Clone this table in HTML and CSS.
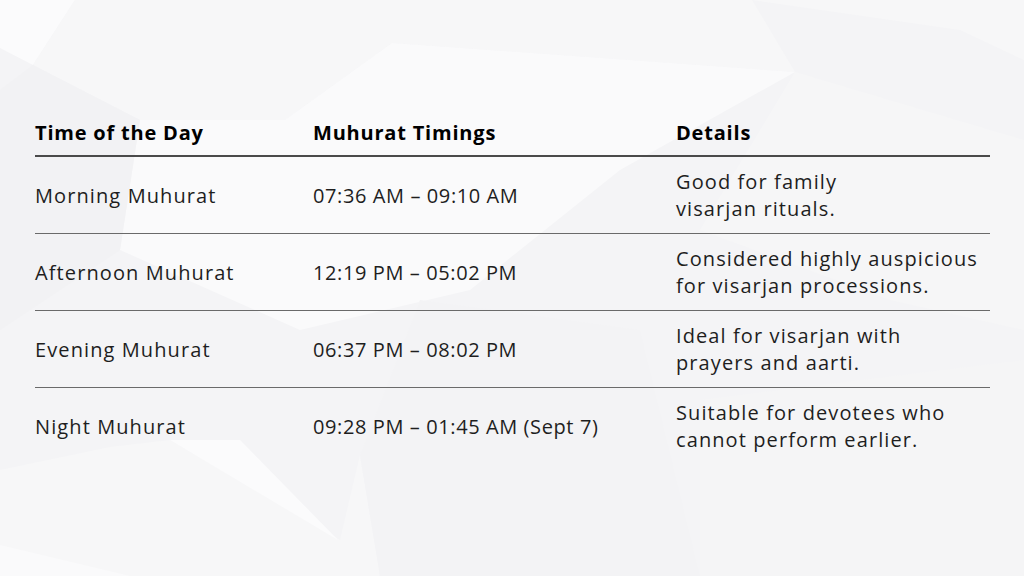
FILE: index.html
```html
<!DOCTYPE html>
<html lang="en">
<head>
<meta charset="utf-8">
<title>Visarjan Muhurat Timings</title>
<link rel="stylesheet" href="styles.css">
</head>
<body>
<svg class="bg" viewBox="0 0 1024 576" preserveAspectRatio="none" aria-hidden="true">
  <rect width="1024" height="576" fill="#f4f4f6"/>
  <polygon points="0,0 75,0 33,65 0,48" fill="#fbfbfc"/>
  <polygon points="75,0 752,0 795,72 392,43 285,120 140,120 33,65" fill="#f7f7f8"/>
  <polygon points="392,43 795,72 620,170 470,290 300,330 120,250 140,120 285,120" fill="#fafafb"/>
  <polygon points="752,0 1024,0 1024,60 960,30" fill="#f7f7f8"/>
  <polygon points="795,72 1024,140 1024,330 890,300 700,230" fill="#f6f6f7"/>
  <polygon points="0,90 33,65 140,120 120,250 0,330" fill="#f2f2f4"/>
  <polygon points="0,470 110,447 170,440 340,540 360,455 380,576 0,576" fill="#f7f7f8"/>
  <polygon points="170,440 240,440 338,540" fill="#fbfbfc"/>
  <polygon points="360,455 420,300 640,330 700,576 380,576" fill="#f3f3f5"/>
  <polygon points="0,545 130,576 0,576" fill="#fafafb"/>
  <polygon points="700,400 1024,360 1024,576 700,576" fill="#f5f5f6"/>
</svg>
<main class="page">
  <div class="table">
    <div class="row head">
      <div class="cell">Time of the Day</div>
      <div class="cell">Muhurat Timings</div>
      <div class="cell">Details</div>
    </div>
    <div class="row">
      <div class="cell">Morning Muhurat</div>
      <div class="cell time">07:36 AM – 09:10 AM</div>
      <div class="cell">Good for family<br>visarjan rituals.</div>
    </div>
    <div class="row">
      <div class="cell">Afternoon Muhurat</div>
      <div class="cell time">12:19 PM – 05:02 PM</div>
      <div class="cell">Considered highly auspicious<br>for visarjan processions.</div>
    </div>
    <div class="row">
      <div class="cell">Evening Muhurat</div>
      <div class="cell time">06:37 PM – 08:02 PM</div>
      <div class="cell">Ideal for visarjan with<br>prayers and aarti.</div>
    </div>
    <div class="row last">
      <div class="cell">Night Muhurat</div>
      <div class="cell time">09:28 PM – 01:45 AM (Sept 7)</div>
      <div class="cell">Suitable for devotees who<br>cannot perform earlier.</div>
    </div>
  </div>
</main>
</body>
</html>
```
FILE: styles.css
```css
html, body {
  margin: 0;
  padding: 0;
  width: 1024px;
  height: 576px;
  overflow: hidden;
}
body {
  position: relative;
  font-family: "Open Sans", "Liberation Sans", sans-serif;
  color: #1e1e1e;
  background: #f4f4f6;
}
.bg {
  position: absolute;
  left: 0;
  top: 0;
  width: 1024px;
  height: 576px;
  z-index: 0;
}
.page {
  position: relative;
  z-index: 1;
  padding: 119px 34px 0 35px;
}
.table {
  width: 955px;
  display: flex;
  flex-direction: column;
}
.row {
  display: grid;
  grid-template-columns: 278px 363px 314px;
  align-items: center;
  height: 76px;
  border-bottom: 1px solid #6a6a6a;
  font-size: 20px;
  line-height: 27px;
  letter-spacing: 1.1px;
}
.row.last {
  border-bottom: none;
}
.row.head {
  height: 27px;
  padding-bottom: 9px;
  border-bottom: 2px solid #4a4a4a;
  font-weight: 700;
  color: #000;
  letter-spacing: 0.8px;
}
.cell {
  white-space: nowrap;
}
.cell.time {
  letter-spacing: 0.6px;
}
```
